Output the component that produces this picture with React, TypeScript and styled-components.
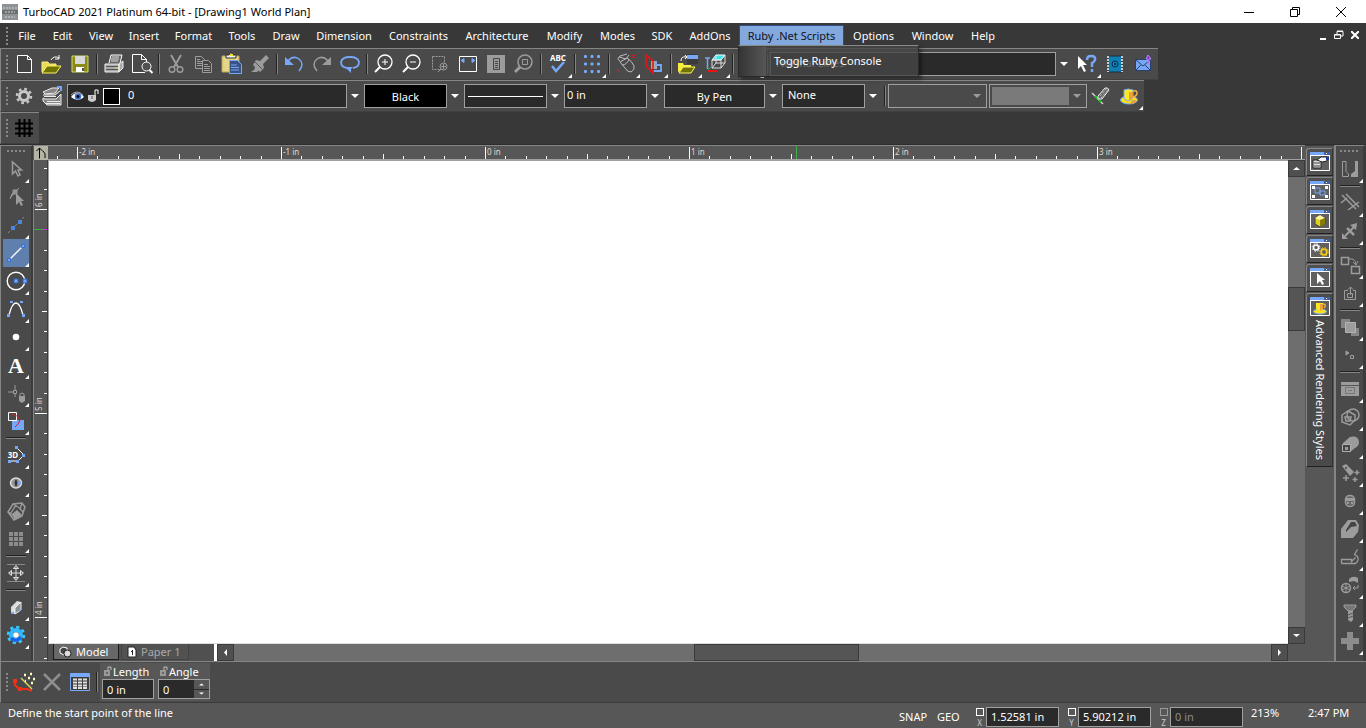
import React, { useEffect, useState } from "react";
import styled, { createGlobalStyle, css } from "styled-components";

const c = {
  bar: "#383838",
  panel: "#4a4a4a",
  soft: "#575757",
  track: "#6e6e6e",
  edge: "#858585",
  field: "#2a2a2a",
  frame: "#a0a0a0",
  blue: "#76a8f7",
  grey: "#9c9c9c",
};

const Global = createGlobalStyle`
  * { box-sizing: border-box; }
  body { margin: 0; background: ${c.bar}; }
  body, button, input, select { font-family: "Noto Sans", "Open Sans", sans-serif; font-size: 11px; }
  button, input, select { border: 0; padding: 0; margin: 0; background: none; color: inherit; border-radius: 0; }
`;

const Shell = styled.div`
  display: flex;
  flex-direction: column;
  min-height: 100vh;
  color: #fff;
  overflow: hidden;
`;

/* ---------- title and menu ---------- */

const TitleBar = styled.header`
  display: flex;
  align-items: center;
  height: 23px;
  padding: 0 2px;
  background: #fff;
  color: #000;
`;

const Title = styled.h1`
  flex: 1;
  margin: 0 0 0 5px;
  font-size: 11px;
  font-weight: 400;
`;

const WindowButton = styled.button`
  width: 46px;
  height: 21px;
  display: grid;
  place-items: center;
`;

const MenuBar = styled.nav`
  display: flex;
  align-items: center;
  height: 25px;
  padding-left: 1px;
  background: ${c.bar};
`;

const MenuGroup = styled.div`
  position: relative;
`;

const MenuItem = styled.button<{ $w: number; $open?: boolean }>`
  width: ${(p) => p.$w}px;
  height: 21px;
  padding-bottom: 1px;
  text-align: center;
  white-space: nowrap;
  ${(p) =>
    p.$open &&
    css`
      background: #83a8de;
      color: #10131c;
      border: 1px solid #2d4e86;
      border-bottom: 0;
    `}
`;

const DropDown = styled.div`
  position: absolute;
  z-index: 5;
  top: 20px;
  left: -1px;
  width: 181px;
  height: 32px;
  padding-top: 1px;
  display: flex;
  border: 1px solid #2a2a2a;
  border-top: 1px solid #8a8a8a;
  background: rgba(70, 70, 70, 0.8);
  box-shadow: 3px 3px 3px rgba(0, 0, 0, 0.35);
  &::before {
    content: "";
    width: 27px;
    background: linear-gradient(90deg, #353535, #565656);
  }
`;

const DropItem = styled.button`
  height: 26px;
  padding-left: 8px;
  white-space: nowrap;
`;

const DocButtons = styled.div`
  margin-left: auto;
  display: flex;
  gap: 2px;
  padding: 0 4px 2px 0;
`;

const DocButton = styled.button`
  width: 14px;
  height: 20px;
  display: grid;
  place-items: center;
`;

/* ---------- toolbars ---------- */

const Grip = styled.span<{ $flat?: boolean }>`
  flex: none;
  ${(p) =>
    p.$flat
      ? css`
          width: 19px;
          height: 2px;
          margin: 4px auto 3px;
          background: repeating-linear-gradient(90deg, #888 0 2px, transparent 2px 4px);
        `
      : css`
          width: 2px;
          height: 18px;
          margin: 0 2px 0 5px;
          background: repeating-linear-gradient(180deg, #888 0 2px, transparent 2px 4px);
        `}
`;

const ToolRow = styled.div`
  display: flex;
  align-items: center;
  align-self: flex-start;
  height: 32px;
  padding-right: 1px;
  background: ${c.panel};
  border-top: 1px solid ${c.edge};
  border-left: 1px solid ${c.edge};
  border-bottom: 1px solid #404040;
`;

const Rule = styled.i<{ $flat?: boolean }>`
  flex: none;
  ${(p) =>
    p.$flat
      ? css`
          width: 20px;
          height: 2px;
          margin: 2px auto;
          background: #222;
          border-bottom: 1px solid ${c.edge};
        `
      : css`
          width: 2px;
          height: 20px;
          margin: 0 2px;
          background: #222;
          border-right: 1px solid ${c.edge};
        `}
`;

const Tool = styled.button<{ $more?: boolean; $active?: boolean; $side?: boolean }>`
  flex: none;
  position: relative;
  width: ${(p) => (p.$side ? 26 : 28)}px;
  height: 28px;
  display: grid;
  place-items: center;
  ${(p) => p.$active && "background: #5f7fae;"}
  ${(p) =>
    p.$more &&
    css`
      &::after {
        content: "";
        position: absolute;
        right: 0;
        bottom: 0;
        border-left: 4px solid transparent;
        border-bottom: 4px solid #fff;
      }
    `}
`;

const Combo = styled.label<{ $w: number; $dim?: boolean; $fill?: string }>`
  flex: none;
  display: flex;
  align-items: center;
  width: ${(p) => p.$w}px;
  height: 24px;
  border: 1px solid ${c.frame};
  background: ${(p) => p.$fill || (p.$dim ? c.panel : c.field)};
`;

const LayerCombo = styled(Combo)`
  margin-left: 1px;
`;

const Pair = styled.div`
  display: flex;
  gap: 2px;
`;

const ComboSelect = styled.select<{ $center?: boolean; $pad?: number }>`
  flex: 1;
  min-width: 0;
  height: 22px;
  padding: 0 0 ${(p) => (p.$center ? 0 : 3)}px ${(p) => p.$pad ?? 0}px;
  appearance: none;
  outline: 0;
  text-align: ${(p) => (p.$center ? "center" : "left")};
  text-align-last: ${(p) => (p.$center ? "center" : "left")};
`;

const Arrow = styled.span<{ $dim?: boolean }>`
  flex: none;
  width: 17px;
  padding-right: 2px;
  display: grid;
  place-items: center;
  &::before {
    content: "";
    border: 4px solid transparent;
    border-top-color: ${(p) => (p.$dim ? c.grey : "#fff")};
    border-bottom: 0;
  }
`;

const Swatch = styled.span`
  width: 17px;
  height: 17px;
  margin-left: 1px;
  background: #000;
  border: 1px solid #fff;
`;

const DimFill = styled.span`
  flex: 1;
  height: 18px;
  margin-left: 2px;
  background: #7a7a7a;
`;

/* ---------- work area ---------- */

const Main = styled.main`
  flex: 1;
  display: flex;
  background: ${c.soft};
  border-top: 1px solid #2e2e2e;
`;

const SideBar = styled.aside<{ $right?: boolean }>`
  flex: none;
  display: flex;
  flex-direction: column;
  align-items: center;
  width: ${(p) => (p.$right ? 32 : 33)}px;
  background: ${c.panel};
  border-top: 1px solid ${c.edge};
  border-left: ${(p) => (p.$right ? 2 : 1)}px solid ${c.edge};
  border-right: ${(p) => (p.$right ? 3 : 2)}px solid #3c3c3c;
`;

const Work = styled.section`
  flex: 1;
  min-width: 0;
  display: grid;
  grid-template-columns: 15px minmax(0, 1fr) 17px;
  grid-template-rows: 14px minmax(0, 1fr) 17px;
  border-top: 1px solid ${c.edge};
`;

const Corner = styled.div`
  background: #b4b4a4;
  margin-left: 1px;
`;

const RulerX = styled.div`
  grid-column: 2 / 4;
  overflow: hidden;
  border-bottom: 1px solid ${c.frame};
  svg { display: block; }
`;

const RulerY = styled.div`
  grid-row: 2 / 4;
  overflow: hidden;
  border-left: 1px solid ${c.edge};
  border-right: 1px solid #3c3c3c;
  contain: size;
  svg { display: block; }
`;

const Canvas = styled.div`
  background: #fff;
  border: 1px solid ${c.frame};
  border-right: 0;
  border-bottom: 1px solid #ddd;
`;

const ScrollY = styled.div`
  display: flex;
  flex-direction: column;
  background: ${c.track};
`;

const ScrollX = styled.div`
  flex: 1;
  display: flex;
  background: ${c.track};
`;

const ScrollButton = styled.button`
  flex: none;
  width: 17px;
  height: 17px;
  display: grid;
  place-items: center;
  background: #505050;
  border: 1px solid #3a3a3a;
`;

const Thumb = styled.span<{ $len: number; $vertical?: boolean }>`
  width: ${(p) => (p.$vertical ? 17 : p.$len)}px;
  height: ${(p) => (p.$vertical ? p.$len : 17)}px;
  background: #555;
  border: 1px solid #3a3a3a;
`;

const Gap = styled.span<{ $grow: number }>`
  flex: ${(p) => p.$grow} 1 0;
`;

const SheetRow = styled.div`
  display: flex;
  min-width: 0;
`;

const Sheets = styled.div`
  display: flex;
  width: 169px;
  padding-left: 5px;
  gap: 2px;
  background: #505050;
  border-right: 3px solid #fff;
`;

const Sheet = styled.button<{ $on?: boolean }>`
  display: flex;
  align-items: center;
  gap: 4px;
  width: ${(p) => (p.$on ? 66 : 68)}px;
  height: 16px;
  padding-left: 5px;
  line-height: 14px;
  white-space: nowrap;
  color: ${(p) => (p.$on ? "#fff" : "#a8a8a8")};
  background: ${(p) => (p.$on ? "#686868" : "#525252")};
  border: 1px solid ${(p) => (p.$on ? "#1c1c1c" : "#444")};
  border-top: 0;
`;

const Palettes = styled.div`
  flex: none;
  width: 29px;
  padding: 2px 1px 0 1px;
  display: flex;
  flex-direction: column;
  gap: 1px;
  background: ${c.soft};
  border-top: 1px solid #3c3c3c;
`;

const Palette = styled.button<{ $on?: boolean }>`
  display: flex;
  flex-direction: column;
  align-items: center;
  justify-content: flex-start;
  gap: 1px;
  width: 27px;
  min-height: 28px;
  padding: 1px 0 ${(p) => (p.$on ? 6 : 1)}px;
  background: ${(p) => (p.$on ? c.panel : "#505050")};
  border: 1px solid ${c.edge};
  border-right-color: #333;
  border-bottom-color: #222;
  border-top-left-radius: 3px;
  span { writing-mode: vertical-rl; white-space: nowrap; line-height: 16px; }
`;

/* ---------- inspector and status ---------- */

const Inspector = styled.section`
  display: flex;
  align-items: center;
  height: 42px;
  background: ${c.panel};
  border-top: 1px solid ${c.edge};
  border-left: 1px solid ${c.edge};
  border-bottom: 1px solid #3c3c3c;
`;

const Fields = styled.div`
  display: flex;
  gap: 4px;
  height: 38px;
  padding: 0 0 0 2px;
  background: ${c.soft};
`;

const Field = styled.label`
  width: 52px;
  display: flex;
  flex-direction: column;
`;

const FieldName = styled.span`
  display: flex;
  align-items: center;
  gap: 0;
  height: 16px;
  padding-left: 1px;
  white-space: nowrap;
`;

const Box = styled.span<{ $w: number }>`
  display: flex;
  width: ${(p) => p.$w}px;
  height: 20px;
  border: 1px solid ${c.frame};
  background: ${c.field};
  input { flex: 1; min-width: 0; padding-left: 4px; outline: 0; }
  input:disabled { color: #8c8c8c; }
`;

const Spin = styled.span`
  display: grid;
  width: 15px;
  grid-template-rows: 1fr 1fr;
  gap: 1px;
  background: ${c.field};
  button { background: ${c.soft}; display: grid; place-items: center; }
`;

const Status = styled.footer`
  display: flex;
  align-items: center;
  height: 25px;
  padding: 0 16px 0 8px;
  background: ${c.soft};
`;

const Note = styled.p<{ $w?: number }>`
  margin: 0;
  height: 20px;
  line-height: 14px;
  white-space: nowrap;
  ${(p) => (p.$w ? `width: ${p.$w}px;` : "flex: 1;")}
`;

const Mode = styled.button<{ $w: number }>`
  width: ${(p) => p.$w}px;
  padding-top: 2px;
  text-align: left;
`;

const Coord = styled.label`
  display: flex;
  gap: 2px;
  width: 92px;
  padding-top: 2px;
`;

const Lock = styled.span<{ $dim?: boolean }>`
  display: flex;
  flex-direction: column;
  align-items: center;
  width: 9px;
  font-size: 8px;
  line-height: 9px;
  color: #ccc;
  input {
    appearance: none;
    width: 8px;
    height: 8px;
    margin: 1px 0 2px;
    border: 1px solid ${(p) => (p.$dim ? "#999" : "#fff")};
  }
`;

/* ---------- icons ---------- */

const W = "#fff";
const B = c.blue;
const G = c.grey;

const frame = (
  <>
    <path d="M2.500 3.500h19v17h-19z" fill="#606060" stroke={W} />
    <path d="M2 3.500h14" stroke={B} strokeWidth="3" />
    <path d="M16 3.500h2m1 0h3" stroke="#3a62a8" strokeWidth="3" />
    <path d="M3 5.500h18" stroke={W} />
  </>
);

const icons: Record<string, React.ReactNode> = {
  page: <path d="M5.500 3.500h10l4 4v13h-14zM15.500 3.500v4h4" fill="#444" stroke={W} />,
  open: (
    <>
      <path d="M2 20V10h6l1 2h7v3" fill="#e9dc55" stroke="#f6ee80" />
      <path d="M2 21l5-7h14l-5 7z" fill="#6f7400" stroke="#fff36b" />
      <path d="M11 8q3-5 8-2M19 3v4h-4" stroke={W} />
    </>
  ),
  save: (
    <>
      <path d="M4 4h16v16H4z" fill="#8a8a18" stroke="#d8d86a" />
      <path d="M7 4h10v8H7z" fill="#d8d8d8" />
      <path d="M8 15h8v5H8z" fill={W} />
      <path d="M14 16h2v3h-2z" fill="#555" />
    </>
  ),
  print: (
    <>
      <path d="M7 11l2-8h11l-2 8" fill="#666" stroke={W} />
      <path d="M10 5h7M9 7h8M9 9h7" stroke="#ddd" />
      <path d="M3 12h14v8H3zM17 12l4-3v7l-4 4z" fill="#aaa" stroke="#eee" />
      <path d="M4 14.500h12M4 17.500h12" stroke="#555" />
      <path d="M13 16h3" stroke="#e8dc30" />
    </>
  ),
  preview: (
    <>
      <path d="M15 20.500H2.500v-18h9l5 5v3M11.500 2.500v5h5" stroke={W} />
      <circle cx="16.500" cy="14.500" r="4.500" fill="#505050" stroke={W} />
      <path d="M19.500 18l3 3" stroke={W} strokeWidth="2" />
    </>
  ),
  cut: (
    <>
      <path d="M7 3l7 12M17 3l-7 12" stroke={G} strokeWidth="2" />
      <circle cx="8" cy="17.500" r="2.800" stroke={G} strokeWidth="1.500" />
      <circle cx="16" cy="17.500" r="2.800" stroke={G} strokeWidth="1.500" />
    </>
  ),
  copy: (
    <>
      <path d="M3.500 4.500h6l3 3v9h-9z" stroke={G} />
      <path d="M5 7.500h3m-3 2h5m-5 2h5m-5 2h5" stroke={G} />
      <path d="M10.500 8.500h6l3 3v9h-9z" fill="#444" stroke={G} />
      <path d="M12 12.500h4m-4 2h6m-6 2h6m-6 2h6" stroke={G} />
    </>
  ),
  paste: (
    <>
      <path d="M2 4h17v16H2z" fill="#e5d587" stroke="#b7a456" />
      <path d="M6 3h3l1-2h2l1 2h3v3H6z" fill="#eee" stroke="#333" />
      <path d="M10 3h3" stroke="#f0e020" strokeWidth="2" />
      <path d="M9.500 8.500h8l4 4v9h-12z" fill="#3a5284" stroke={B} />
      <path d="M11 13h6m-6 2.500h8m-8 2.500h8" stroke={B} />
    </>
  ),
  brush: (
    <>
      <path d="M8 8l4 1 6-6 3 3-6 6 1 4-4 4-7-7z" fill={G} />
      <path d="M7 10l7 7" stroke="#555" />
      <path d="M8 13l-2 5-3 2 6 0 3-3z" fill={G} />
    </>
  ),
  undo: (
    <>
      <path d="M3 5v8h9z" fill={B} />
      <path d="M6 9q5-6 11-2 6 5 0 12" stroke={B} strokeWidth="1.500" />
    </>
  ),
  redo: (
    <>
      <path d="M21 5v8h-9z" fill={G} />
      <path d="M18 9Q13 3 7 7q-6 5 0 12" stroke={G} strokeWidth="1.500" />
    </>
  ),
  repeat: (
    <>
      <path d="M9 16q-6-1-6-6 1-5 9-5t9 5q0 5-6 6" stroke={B} strokeWidth="1.800" />
      <path d="M8 15h7l-2 2v4l-5-5z" fill={B} />
    </>
  ),
  zoomIn: (
    <>
      <circle cx="13" cy="10" r="7" stroke={W} strokeWidth="1.300" />
      <path d="M13 7v6M10 10h6" stroke={W} />
      <path d="M8 15l-5 5" stroke={W} strokeWidth="2" />
    </>
  ),
  zoomOut: (
    <>
      <circle cx="13" cy="10" r="7" stroke={W} strokeWidth="1.300" />
      <path d="M10 10h6" stroke={W} />
      <path d="M8 15l-5 5" stroke={W} strokeWidth="2" />
    </>
  ),
  zoomArea: (
    <>
      <path d="M4.500 4.500h12v13h-12z" stroke={G} strokeDasharray="2 1" />
      <circle cx="15.500" cy="14.500" r="3.500" fill={c.panel} stroke={G} />
      <path d="M15.500 12v5M13 14.500h5M13 17l-3 3" stroke={G} />
    </>
  ),
  extents: (
    <>
      <path d="M3.500 4.500h17v15h-17z" stroke={W} />
      <path d="M5 8.500l3-2v4zM19 8.500l-3-2v4z" fill={B} stroke={B} />
    </>
  ),
  fullPage: (
    <>
      <path d="M3 3h18v18H3z" fill={G} />
      <path d="M9.500 6.500h6v11h-6z" fill="#999" stroke="#444" />
      <path d="M11 9.500h3m-3 2h3m-3 2h3m-3 2h3" stroke="#444" />
    </>
  ),
  zoomSel: (
    <>
      <circle cx="13" cy="10" r="7" stroke={G} strokeWidth="1.500" />
      <path d="M10.500 7.500h5v5h-5z" stroke={G} />
      <path d="M8 15l-5 5" stroke={G} strokeWidth="3" />
    </>
  ),
  spell: (
    <>
      <text x="12" y="9" fill={W} fontSize="8" fontWeight="700" textAnchor="middle">ABC</text>
      <path d="M6 14l4 5 8-9" stroke={B} strokeWidth="2.500" />
    </>
  ),
  dots: (
    <path
      d="M4 4.500h3m3.500 0h3m3.500 0h3M4 12h3m3.500 0h3m3.500 0h3M4 19.500h3m3.500 0h3m3.500 0h3M5.500 3v3M12 3v3M18.500 3v3M5.500 10.500v3M12 10.500v3M18.500 10.500v3M5.500 18v3M12 18v3M18.500 18v3"
      stroke={B}
      strokeWidth="2"
    />
  ),
  mouse: (
    <>
      <path d="M6 10l7-4q5 3 7 8 1 4-3 6-4 0-6-4z" stroke="#bbb" />
      <path d="M8 13q5 0 7-6M6 9Q2 7 6 4l7-2M5 5l7 2 3-4" stroke="#bbb" />
      <path d="M18 3l3 3m0-3l-3 3M3 17l3 3m0-3l-3 3" stroke="#e01818" />
    </>
  ),
  workplane: (
    <>
      <path d="M9 9h6v8H9z" fill="#aaa" />
      <path d="M14 9v4h5v6h-8" stroke={B} strokeWidth="1.800" />
      <path d="M4 3l7 6v12l-7-7z" stroke="#e81414" strokeWidth="1.600" />
    </>
  ),
  openSet: (
    <>
      <path d="M11 2h11v10H11z" fill="#3a3a3a" />
      <path d="M11 3h11v4H11z" fill={B} />
      <path d="M5 9q0-5 5-4M9 3l2 2-2 2" stroke={W} />
      <path d="M2 20v-9h5l1 2h7v4" fill="#f6ec3c" />
      <path d="M3 21l4-6h12l-4 6z" fill="#6f7400" stroke="#fff36b" />
    </>
  ),
  cube: (
    <>
      <path d="M8 8l4-5h9l-4 5z" fill="#35e6ee" stroke={W} />
      <path d="M8 8h9v8H8zM17 8l4-5v8l-4 5M12 4v7h9M8 16l4-5" stroke="#ddd" />
      <path d="M1 6h5M3.500 6v11" stroke={B} strokeWidth="1.500" />
      <path d="M4 19h9" stroke="#e81414" strokeWidth="2" />
      <path d="M4 18l4-4" stroke="#22b04c" />
    </>
  ),
  help: (
    <>
      <path d="M3 4v13l3-3 3 6 2-1-3-6h4z" fill={W} />
      <path d="M12 8q0-4 4-4 5 0 4 4-1 2-3 3v4M17 17v3" stroke={B} strokeWidth="2.500" />
    </>
  ),
  book: (
    <>
      <path d="M5 4h14v16H5z" fill="#0f7fb4" stroke="#1c2d3c" />
      <path d="M5 4v16M19 4v16" stroke="#ccc" strokeWidth="2" strokeDasharray="2 1" />
      <circle cx="12" cy="12" r="3" stroke="#0b2c44" />
      <circle cx="12" cy="12" r="1" fill="#0b2c44" />
    </>
  ),
  mail: (
    <>
      <path d="M4.500 7.500h15v11h-15z" fill={B} stroke="#28406e" />
      <path d="M5 8l7 6 7-6M5 18l5-5M19 18l-5-5" stroke="#28406e" />
      <path d="M17 12V7h-2l2-4 3 4h-2v5z" fill="#7a2fd0" stroke="#b58ae8" />
    </>
  ),
  gear: (
    <>
      <circle cx="12" cy="12" r="4.500" stroke="#c8c8c8" strokeWidth="3" />
      <circle cx="12" cy="12" r="7" stroke="#c8c8c8" strokeWidth="2.500" strokeDasharray="2.700 2.800" />
    </>
  ),
  layers: (
    <>
      <path d="M3 8l9-4h7l-4 5-10 1zM3 11l12 0 5-4M3 14l2 1h11l5-5v11H7l-4-4z" fill="#858585" stroke="#eee" />
      <path d="M7 17.500h13M6 19.500h14M4 12.500h12" stroke="#eee" />
      <path d="M17 3h4v4" stroke={B} strokeWidth="2" />
    </>
  ),
  eraser: (
    <>
      <path d="M3 9l11 11" stroke="#ddd" strokeWidth="1.200" />
      <path d="M6 12l6 6" stroke="#17c317" strokeWidth="1.800" />
      <path d="M9 12l7-8q3-1 4 2l-7 9-4 0z" fill="#666" stroke="#eee" />
      <path d="M11 12l7-8M12 14l7-8" stroke="#ddd" strokeDasharray="1 1" />
    </>
  ),
  cup: (
    <>
      <ellipse cx="12" cy="16" rx="8.500" ry="4" fill="#f7e21c" stroke={B} />
      <path d="M13 20q7-1 7-4h-5z" fill="#e8a13a" />
      <path d="M7 6q4-2 9 0v7q-1 3-5 4-4-1-4-4z" fill="#ffe81f" stroke={B} />
      <path d="M12 8h4v6q-1 2-4 2z" fill="#e8a13a" />
      <path d="M16 7q4-1 4 2t-4 4" stroke="#f0b14c" strokeWidth="1.500" />
    </>
  ),
  grid: <path d="M7.500 3v18M12.500 3v18M17.500 3v18M3 7.500h18M3 12.500h18M3 17.500h18" stroke="#000" strokeWidth="2" />,
  select: <path d="M8.500 5v12l3-3 2.500 5 2-1-2-5h3.500z" stroke={G} strokeWidth="1.500" />,
  nodeEdit: (
    <>
      <path d="M6 14q1-6 6-8l3-3M9 5h4v4H9z" stroke={G} fill="#888" />
      <path d="M12 8v12l3-3 2 4 2-1-2-4h3z" fill={G} />
    </>
  ),
  construct: (
    <>
      <path d="M4 20L20 4" stroke="#888" strokeDasharray="3 2" />
      <path d="M7 13h4v4H7zM14 7h4v4h-4z" fill="#4f86e0" />
    </>
  ),
  line: (
    <>
      <path d="M5 19L19 5" stroke={W} strokeWidth="1.300" />
      <path d="M3.500 17.500h3v3h-3zM17.500 3.500h3v3h-3z" fill={B} stroke="#3b6fd0" />
    </>
  ),
  circle: (
    <>
      <circle cx="12" cy="12" r="8.800" stroke={W} strokeWidth="1.400" />
      <path d="M10 10h4v4h-4zM19 10h4v4h-4z" fill={B} stroke="#2f66c8" />
    </>
  ),
  curve: (
    <>
      <path d="M5 18q3-12 7-12t7 12" stroke={W} strokeWidth="1.300" />
      <path d="M6 4h3v2H6zM16 4h3v2h-3zM3 17h3v3H3zM18 17h3v3h-3z" fill={B} />
    </>
  ),
  point: <circle cx="12" cy="12" r="3.300" fill={W} />,
  text: (
    <text x="12" y="20" fill={W} fontFamily="Liberation Serif, serif" fontSize="22" fontWeight="700" textAnchor="middle">
      A
    </text>
  ),
  snapLock: (
    <>
      <path d="M4 11h5M11 4v5M11 13v3M9.500 9.500h3v3h-3z" stroke={G} />
      <path d="M15 15h6v5l-3 2-3-2z" fill={G} />
      <path d="M16 15v-2q2-2 4 0v2" stroke={G} />
    </>
  ),
  shapes: (
    <>
      <path d="M8 11h12v10H8z" fill={B} />
      <path d="M4.500 3.500h8v8h-8z" stroke={W} />
      <path d="M7 5q7 1 9 6-1 4-5 7" stroke="#e01818" />
    </>
  ),
  poly3d: (
    <>
      <text x="9" y="15" fill={W} fontSize="8" fontWeight="700" textAnchor="middle">3D</text>
      <path d="M13 5l7 7-6 6H5" stroke={W} />
      <path d="M11 3h3v3h-3zM18 11h3v3h-3zM12 17h3v3h-3zM4 17h3v3H4z" fill={B} />
    </>
  ),
  sphere: (
    <>
      <ellipse cx="12" cy="12" rx="5.500" ry="5" fill="#999" stroke="#ddd" strokeWidth="1.500" />
      <path d="M12 8q-3 4 0 8 3-4 0-8" fill="#333" />
      <circle cx="15.500" cy="12" r="1.800" fill={B} />
    </>
  ),
  bend: (
    <>
      <path d="M4 13l5-8 9-1 3 4-3 9-8 4z" stroke={G} strokeWidth="1.500" />
      <path d="M9 5q5 2 10 8M4 13q5 2 7 7M12 6l-5 8M18 4l-2 6" stroke={G} strokeWidth="1.300" />
      <path d="M13 11l5 5-7 4-3-5z" fill={G} />
    </>
  ),
  array: (
    <path d="M5 7h4m1 0h4m1 0h4M5 12h4m1 0h4m1 0h4M5 17h4m1 0h4m1 0h4" stroke="#8c8c8c" strokeWidth="4" />
  ),
  move: (
    <>
      <path d="M3 3.500h18M3 20.500h18" stroke="#888" />
      <path d="M12 6v12M6 12h12" stroke="#ddd" />
      <path d="M12 4.500l2.500 3h-5zM12 19.500l2.500-3h-5zM4.500 12l3-2.500v5zM19.500 12l-3-2.500v5z" fill="#888" stroke="#ddd" />
    </>
  ),
  wall: (
    <>
      <path d="M7 12l6-6 4 1v8l-6 4-4-1z" fill="#ddd" />
      <path d="M11 13l6-6v8l-6 4z" fill="#8e8e8e" stroke="#eee" />
      <path d="M7 18h3M15 15h2" stroke={B} strokeWidth="2" />
    </>
  ),
  cog: (
    <>
      <circle cx="12" cy="12" r="5" stroke="#2fb8ff" strokeWidth="4" />
      <circle cx="12" cy="12" r="8" stroke="#38c8ff" strokeWidth="2.500" strokeDasharray="3.200 3.080" />
      <path d="M7 15q5 5 10-1" stroke="#1560e8" strokeWidth="3" />
      <circle cx="12" cy="12" r="2.800" fill={W} />
    </>
  ),
  magnet: (
    <>
      <path d="M4.500 4.500v15h6V17L8 14.500v-10z" stroke={G} />
      <path d="M20 4h-3v10l-4 3v3h7z" fill={G} />
    </>
  ),
  trim: <path d="M4 4l14 14M8 3l13 13M3 12l6-5M10 19l11-8" stroke={G} strokeWidth="1.500" />,
  stretch: (
    <>
      <path d="M7 17L18 6" stroke={G} strokeWidth="2" />
      <path d="M19 4l-1 7-6-5zM4 20v-6l6 6z" fill={G} />
      <path d="M9 9l7 7" stroke={G} strokeWidth="2.500" />
    </>
  ),
  replace: (
    <>
      <path d="M3.500 4.500h7v7h-7zM13.500 13.500h8v7h-8z" stroke={G} strokeWidth="1.500" />
      <path d="M11 6q6-1 7 5M15 9l3 3 2-4" stroke={G} />
    </>
  ),
  lift: (
    <>
      <path d="M10 9.500H6.500v9h11v-9H15M9.500 12.500h5v4h-5z" stroke={G} />
      <path d="M12.500 14V6M10 8.500L12.500 6 15 8.500" stroke={G} />
    </>
  ),
  union: (
    <>
      <path d="M3 4h9v9H3zM13 13h8v8h-8z" fill="#858585" />
      <path d="M7.500 7.500h10v10h-10z" fill={G} stroke="#b4b4b4" />
    </>
  ),
  tiny: (
    <>
      <path d="M8 8v4l3-2z" fill={G} stroke={G} />
      <path d="M12.500 12.500h3v3h-3z" stroke={G} />
    </>
  ),
  sheet: (
    <>
      <path d="M3 5h18v14H3z" fill={G} />
      <path d="M3 8.500h18" stroke="#555" />
      <path d="M7.500 10.500h9v6h-9zM10 13.500h4" stroke="#777" />
    </>
  ),
  loft: (
    <>
      <circle cx="15" cy="10" r="6" stroke={G} strokeWidth="1.500" />
      <path d="M4 10l6-4 7 4v5l-5 5-8-3zM7 12h6l-1 4H8z" stroke={G} strokeWidth="1.500" />
    </>
  ),
  cylinder: (
    <>
      <path d="M5 10l7-6q8-2 9 5 0 4-4 6l-5 4H5z" fill={G} />
      <path d="M4.500 11.500h8v7h-8z" fill="#444" stroke="#b0b0b0" />
      <path d="M7 14h3v3H7z" fill={G} />
    </>
  ),
  sparkle: (
    <>
      <path d="M4 5l4-2 8 8-4 4z" fill={G} />
      <circle cx="8" cy="7" r="1" fill="#444" />
      <path d="M19 9v5M16.500 11.500h5M8 14v6M5 17h6M17 16v5M14.500 18.500h5" stroke={G} strokeWidth="1.500" />
    </>
  ),
  barrel: (
    <>
      <rect x="7.500" y="6.500" width="9" height="11" rx="4" fill="#666" stroke={G} strokeWidth="1.500" />
      <path d="M7 9h10v3H7z" fill={G} />
      <path d="M9 14h2m2 0h2" stroke={G} strokeWidth="2" />
    </>
  ),
  chamfer: (
    <>
      <path d="M3 12l7-9h8l3 5-1 7-5 6H3z" fill={G} />
      <path d="M8 13l5-8h4l2 4-6 1-5 5z" fill="#444" />
    </>
  ),
  pipe: <path d="M3.500 18.500h14q4-3 2-7l-3-2 3-5M3.500 18.500v-4h10v2l4-4" stroke={G} strokeWidth="1.300" />,
  flower: (
    <>
      <circle cx="8" cy="15" r="4.500" stroke={G} strokeWidth="1.500" />
      <path d="M8 11v8M4 13l8 4M12 13l-8 4" stroke={G} />
      <path d="M11 6q4-4 9-1v5l-4-2-5 1z" fill={G} />
      <path d="M20 12v3h-5M17 13l-2 2 2 2" stroke={G} />
    </>
  ),
  screw: (
    <>
      <path d="M6 4h12v2l-4 4h-4L6 6z" fill="#777" stroke={G} />
      <path d="M10 10h5v9l-2 2-3-2z" fill={G} />
      <path d="M10 14l5-2M10 17l5-2" stroke="#555" />
    </>
  ),
  plus: <path d="M9 3h6v6h6v6h-6v6H9v-6H3V9h6z" fill="#8c8c8c" />,
  palProps: (
    <>
      {frame}
      <path d="M5 10h8v8H5z" fill="#ddd" stroke="#222" />
      <path d="M6 13h6m-6 3h6" stroke="#444" />
      <path d="M9 10l4-3h6v4l-5 1z" fill={W} stroke="#222" />
      <path d="M18 7h3v3h-3z" fill="#223b98" />
    </>
  ),
  palSelect: (
    <>
      {frame}
      <path d="M7 9h5v5H7zM12 12h5v4h-5z" stroke={B} />
      <path d="M4 7h3v3H4zM17 7h3v3h-3zM4 16h3v3H4zM17 16h3v3h-3z" fill={W} />
    </>
  ),
  palBlocks: (
    <>
      {frame}
      <path d="M7 10l5-3 5 3v6l-5 3-5-3z" fill="#e0d022" stroke="#444" />
      <path d="M7 10l5-3 5 3-5 2z" fill="#fff7a0" />
      <path d="M12 12v7l5-3v-6z" fill="#8a7c00" />
    </>
  ),
  palGears: (
    <>
      {frame}
      <circle cx="8" cy="10.500" r="2.500" stroke={W} strokeWidth="1.500" />
      <circle cx="8" cy="10.500" r="3.800" stroke={W} strokeDasharray="1.500 1.500" />
      <circle cx="16" cy="15" r="2.800" stroke="#f2c81c" strokeWidth="1.800" />
      <circle cx="16" cy="15" r="4.300" stroke="#f2c81c" strokeDasharray="1.700 1.700" />
    </>
  ),
  palPointer: (
    <>
      {frame}
      <path d="M9 7v11l3-3 2 4 2-1-2-4h3z" fill={W} />
    </>
  ),
  palStyles: (
    <>
      {frame}
      <ellipse cx="12" cy="16.500" rx="6.500" ry="2.500" fill="#f7e21c" stroke={B} />
      <path d="M8 8h7v6q-3 3-7 0z" fill="#ffe81f" />
      <path d="M12 9h3v5l-3 2z" fill="#e8a13a" />
      <path d="M15 9q4 0 1 4" stroke="#f0b14c" strokeWidth="1.500" />
    </>
  ),
  finish: (
    <>
      <path d="M3 9v6l4 4h8l5 2" stroke="#f23018" strokeWidth="2" />
      <path d="M1 9h4v4H1zM6 17h4v4H6z" fill="#f23018" />
      <path d="M9 8l11 11" stroke="#d8d060" strokeWidth="1.500" />
      <path d="M12 5h2m4-1h2m-4 4h2m3 1h2m-4 4h2m-8-2h1" stroke="#fffbc0" strokeWidth="2.500" />
    </>
  ),
  cancel: <path d="M4 4l16 16M20 4L4 20" stroke="#8e8e8e" strokeWidth="2.500" />,
  table: (
    <>
      <path d="M2.500 3.500h19v17h-19z" fill="#3d3d3d" stroke={B} />
      <path d="M3 5.500h18" stroke={B} strokeWidth="3" />
      <path d="M5 9.500h14M5 12.500h14M5 15.500h14M5 18h14" stroke="#ddd" strokeWidth="2" strokeDasharray="4 1" />
    </>
  ),
};

const Icon = ({ name }: { name: string }) => (
  <svg width="24" height="24" viewBox="0 0 24 24" fill="none" aria-hidden="true">
    {icons[name]}
  </svg>
);

const Padlock = () => (
  <svg width="10" height="12" viewBox="0 0 10 12" fill="none" aria-hidden="true">
    <path d="M1 5h6v6H1z" fill="#999" />
    <path d="M5 5V2h3v3" stroke="#bbb" />
    <path d="M4 7v2" stroke="#333" />
  </svg>
);

const Chevron = ({ dir, small }: { dir: "up" | "down" | "left" | "right"; small?: boolean }) => {
  const d = { up: "M0 5h7L3.500 2z", down: "M0 2h7L3.500 5z", left: "M5 0v7L2 3.500z", right: "M2 0v7l3-3.500z" }[dir];
  const s = small ? 5 : 7;
  return (
    <svg width={s} height={s} viewBox="0 0 7 7" aria-hidden="true">
      <path d={d} fill="#fff" />
    </svg>
  );
};

/* ---------- data ---------- */

const menus: [string, number][] = [
  ["File", 34], ["Edit", 37], ["View", 40], ["Insert", 46], ["Format", 53], ["Tools", 44], ["Draw", 44],
  ["Dimension", 72], ["Constraints", 77], ["Architecture", 80], ["Modify", 55], ["Modes", 51], ["SDK", 38],
  ["AddOns", 58], ["Ruby .Net Scripts", 105], ["Options", 59], ["Window", 59], ["Help", 42],
];

/* "|" is a divider; a trailing "+" marks a tool with a flyout */
const standard =
  "page open save | print preview | cut copy paste brush | undo redo repeat | zoomIn zoomOut zoomArea extents fullPage zoomSel | spell+ | dots+ | mouse+ workplane+ | openSet+ cube+ |";
const drawing =
  "select+ nodeEdit construct+ line+ circle+ curve+ point+ text+ snapLock+ shapes+ | poly3d+ sphere+ bend+ array+ | move+ | wall+ cog+";
const modifying =
  "magnet+ | trim+ stretch+ | replace+ lift+ | union+ tiny+ | sheet+ loft+ cylinder+ sparkle+ barrel+ chamfer+ pipe+ flower+ screw+ plus+";

const Tools = ({ list, side, active }: { list: string; side?: boolean; active?: string }) => (
  <>
    {list.split(" ").map((entry, i) => {
      if (entry === "|") return <Rule key={i} $flat={side} />;
      const name = entry.replace("+", "");
      return (
        <Tool key={i} aria-label={name} $more={entry !== name} $side={side} $active={name === active}>
          <Icon name={name} />
        </Tool>
      );
    })}
  </>
);

const Picker = ({ label, value, w, center, pad, fill }: {
  label: string; value: string; w: number; center?: boolean; pad?: number; fill?: string;
}) => (
  <>
    <Combo $w={w} $fill={fill}>
      <ComboSelect aria-label={label} $center={center} $pad={pad}>
        <option>{value}</option>
      </ComboSelect>
    </Combo>
    <Arrow />
  </>
);

const INCH = 204;

const useWindowSize = () => {
  const [size, setSize] = useState({ w: window.innerWidth, h: window.innerHeight });
  useEffect(() => {
    const update = () => setSize({ w: window.innerWidth, h: window.innerHeight });
    window.addEventListener("resize", update);
    return () => window.removeEventListener("resize", update);
  }, []);
  return size;
};

const tickLength = (n: number) => (n % 10 === 0 ? 12 : n % 5 === 0 ? 5 : 3);

const HorizontalRuler = ({ length }: { length: number }) => (
  <svg width={length} height="14" aria-hidden="true">
    {Array.from({ length: Math.ceil((length * 10) / INCH) }, (_, i) => {
      const len = tickLength(i - 1);
      return <rect key={i} x={Math.round(29 + ((i - 1) * INCH) / 10)} y={13 - len} width="1" height={len} fill="#fff" />;
    })}
    {Array.from({ length: Math.floor((length - 50) / INCH) + 1 }, (_, i) => (
      <text key={i} x={31 + i * INCH} y="9" fontSize="8" fill="#e0d8d0">{`${i - 2} in`}</text>
    ))}
    <rect x="748" y="0" width="1" height="13" fill="#3fae49" />
  </svg>
);

const VerticalRuler = ({ length }: { length: number }) => (
  <svg width="13" height={length} aria-hidden="true">
    {Array.from({ length: Math.ceil((length * 10) / INCH) }, (_, i) => {
      const len = tickLength(i - 2);
      return <rect key={i} x={13 - len} y={Math.round(49 + ((i - 2) * INCH) / 10)} width={len} height="1" fill="#fff" />;
    })}
    {Array.from({ length: Math.floor((length - 49) / INCH) + 1 }, (_, i) => (
      <text key={i} transform={`translate(8 ${47 + i * INCH}) rotate(-90)`} fontSize="8" fill="#e0d8d0">{`${6 - i} in`}</text>
    ))}
    <rect x="0" y="69" width="10" height="1" fill="#3fae49" />
    <rect x="10" y="69" width="3" height="1" fill="#e020e0" />
  </svg>
);

export default function App() {
  const { w, h } = useWindowSize();
  return (
    <Shell>
      <Global />
      <TitleBar>
        <svg width="16" height="16" aria-hidden="true">
          <rect width="16" height="16" fill="#8d9294" />
          <rect y="6" width="16" height="4" fill="#6a6f70" />
          <path d="M1 4h14M3 8h10M3 13h10" stroke="#d0d4d4" strokeDasharray="2 1" />
        </svg>
        <Title>TurboCAD 2021 Platinum 64-bit - [Drawing1 World Plan]</Title>
        <WindowButton aria-label="Minimize">
          <svg width="10" height="10"><path d="M0 5.500h10" stroke="#000" /></svg>
        </WindowButton>
        <WindowButton aria-label="Restore">
          <svg width="10" height="10" fill="none" stroke="#000"><path d="M.5 2.500h7v7h-7zM2.500 2V.5h7v7H8" /></svg>
        </WindowButton>
        <WindowButton aria-label="Close">
          <svg width="10" height="10"><path d="M0 0l10 10M10 0L0 10" stroke="#000" /></svg>
        </WindowButton>
      </TitleBar>

      <MenuBar>
        <Grip />
        {menus.map(([name, width]) => (
          <MenuGroup key={name}>
            <MenuItem $w={width} $open={name.startsWith("Ruby")}>{name}</MenuItem>
            {name.startsWith("Ruby") && (
              <DropDown>
                <DropItem>Toggle Ruby Console</DropItem>
              </DropDown>
            )}
          </MenuGroup>
        ))}
        <DocButtons>
          <DocButton aria-label="Minimize drawing">
            <svg width="8" height="10"><path d="M1 9h6" stroke="#fff" strokeWidth="2" /></svg>
          </DocButton>
          <DocButton aria-label="Restore drawing">
            <svg width="10" height="10" fill="none" stroke="#fff"><path d="M.5 4.500h6v4h-6zM.5 5h6M3 4V1.500h6V6H7M3 1h6" /></svg>
          </DocButton>
          <DocButton aria-label="Close drawing">
            <svg width="8" height="8"><path d="M0 0l8 8M8 0L0 8" stroke="#fff" strokeWidth="2" /></svg>
          </DocButton>
        </DocButtons>
      </MenuBar>

      <ToolRow>
        <Grip />
        <Tools list={standard} />
        <Tool aria-label="Line style" $more />
        <Rule />
        <Picker label="Dimension style" value="Normal Lines" w={286} pad={5} />
        <Tools list="help+ book mail" />
      </ToolRow>

      <ToolRow>
        <Grip />
        <Tools list="gear layers" />
        <LayerCombo $w={280}>
          <svg width="34" height="20" viewBox="0 0 34 20" fill="none" aria-hidden="true">
            <path d="M3 11q6-8 13 0-6 6-13 0z" fill="#fff" />
            <circle cx="10" cy="10.500" r="3.200" fill="#3a6fd0" />
            <circle cx="10" cy="10.500" r="1.400" fill="#000" />
            <path d="M3 9q6-6 12 0" stroke="#aaa" />
            <path d="M20 9h8v5q-4 4-8 0z" fill="#ccc" />
            <path d="M27 9V4h3v4" stroke="#fff" />
            <path d="M24 10v3" stroke="#555" />
          </svg>
          <Swatch />
          <ComboSelect aria-label="Layer" $pad={8}>
            <option>0</option>
          </ComboSelect>
        </LayerCombo>
        <Arrow />
        <Picker label="Colour" value="Black" w={83} center fill="#000" />
        <Combo $w={83}>
          <svg width="81" height="20" aria-hidden="true"><path d="M3 10.500h75" stroke="#fff" /></svg>
        </Combo>
        <Arrow />
        <Picker label="Pen width" value="0 in" w={83} pad={2} />
        <Picker label="Brush" value="By Pen" w={101} center />
        <Picker label="Pattern" value="None" w={83} pad={5} />
        <Rule />
        <Pair>
          <Combo $w={99} $dim>
            <ComboSelect aria-label="Material" disabled><option> </option></ComboSelect>
            <Arrow $dim />
          </Combo>
          <Combo $w={98} $dim>
            <DimFill />
            <Arrow $dim />
          </Combo>
        </Pair>
        <Tools list="eraser cup+" />
      </ToolRow>

      <ToolRow>
        <Grip />
        <Tools list="grid" />
      </ToolRow>

      <Main>
        <SideBar>
          <Grip $flat />
          <Tools list={drawing} side active="line" />
        </SideBar>
        <Work>
          <Corner>
            <svg width="14" height="14" fill="none" aria-hidden="true">
              <path d="M5.500 12V2M2.500 5l3-3 3 3M5 12h1M9 5q3 2 2 7" stroke="#000" />
            </svg>
          </Corner>
          <RulerX><HorizontalRuler length={w - 109} /></RulerX>
          <RulerY><VerticalRuler length={h - 227} /></RulerY>
          <Canvas />
          <ScrollY>
            <ScrollButton aria-label="Scroll up"><Chevron dir="up" /></ScrollButton>
            <Gap $grow={27} />
            <Thumb $len={44} $vertical />
            <Gap $grow={73} />
            <ScrollButton aria-label="Scroll down"><Chevron dir="down" /></ScrollButton>
          </ScrollY>
          <SheetRow>
            <Sheets>
              <Sheet $on>
                <svg width="13" height="12" fill="none" aria-hidden="true">
                  <path d="M1 3l3-2 4 1v5l-3 2-4-2z" fill="#444" stroke="#fff" />
                  <circle cx="8.500" cy="7.500" r="3.500" fill="#ddd" stroke="#222" />
                </svg>
                Model
              </Sheet>
              <Sheet>
                <svg width="10" height="12" fill="none" aria-hidden="true">
                  <path d="M1 1h6l2 3v7H1z" fill="#fff" stroke="#222" />
                  <path d="M5.500 4v5M4 5.500h1" stroke="#223" />
                </svg>
                Paper 1
              </Sheet>
            </Sheets>
            <ScrollX>
              <ScrollButton aria-label="Scroll left"><Chevron dir="left" /></ScrollButton>
              <Gap $grow={460} />
              <Thumb $len={165} />
              <Gap $grow={412} />
              <ScrollButton aria-label="Scroll right"><Chevron dir="right" /></ScrollButton>
            </ScrollX>
          </SheetRow>
        </Work>
        <Palettes>
          {["palProps", "palSelect", "palBlocks", "palGears", "palPointer"].map((n) => (
            <Palette key={n} aria-label={n}><Icon name={n} /></Palette>
          ))}
          <Palette $on><Icon name="palStyles" /><span>Advanced Rendering Styles</span></Palette>
        </Palettes>
        <SideBar $right>
          <Grip $flat />
          <Tools list={modifying} side />
        </SideBar>
      </Main>

      <Inspector>
        <Grip />
        <Tools list="finish cancel table" />
        <Rule />
        <Fields>
          <Field>
            <FieldName><Padlock />Length</FieldName>
            <Box $w={52}><input defaultValue="0 in" /></Box>
          </Field>
          <Field>
            <FieldName><Padlock />Angle</FieldName>
            <Box $w={52}>
              <input defaultValue="0" />
              <Spin>
                <button aria-label="Increase angle"><Chevron dir="up" small /></button>
                <button aria-label="Decrease angle"><Chevron dir="down" small /></button>
              </Spin>
            </Box>
          </Field>
        </Fields>
      </Inspector>

      <Status>
        <Note>Define the start point of the line</Note>
        <Mode $w={38}>SNAP</Mode>
        <Mode $w={38}>GEO</Mode>
        {[["X", "1.52581 in"], ["Y", "5.90212 in"], ["Z", "0 in"]].map(([axis, value]) => (
          <Coord key={axis}>
            <Lock $dim={axis === "Z"}>
              <input type="checkbox" aria-label={`Lock ${axis}`} />
              {axis}
            </Lock>
            <Box $w={73}>
              <input aria-label={axis} defaultValue={value} disabled={axis === "Z"} />
            </Box>
          </Coord>
        ))}
        <Note $w={57}>213%</Note>
        <Note $w={42}>2:47 PM</Note>
      </Status>
    </Shell>
  );
}
